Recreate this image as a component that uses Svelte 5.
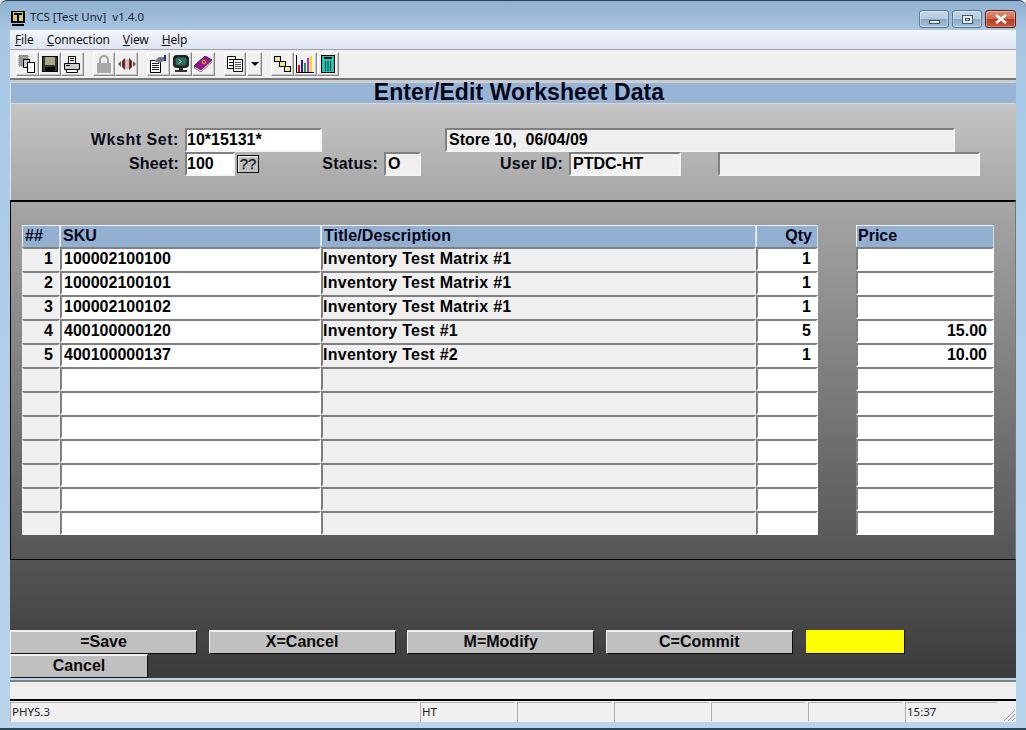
<script lang="ts">
	type Row = { sku: string; title: string; qty: string; price: string };

	const filled: Row[] = [
		{ sku: '100002100100', title: 'Inventory Test Matrix #1', qty: '1', price: '' },
		{ sku: '100002100101', title: 'Inventory Test Matrix #1', qty: '1', price: '' },
		{ sku: '100002100102', title: 'Inventory Test Matrix #1', qty: '1', price: '' },
		{ sku: '400100000120', title: 'Inventory Test #1', qty: '5', price: '15.00' },
		{ sku: '400100000137', title: 'Inventory Test #2', qty: '1', price: '10.00' }
	];
	const rows: Row[] = [...filled, ...Array(7).fill({ sku: '', title: '', qty: '', price: '' })];
	const actions = ['=Save', 'X=Cancel', 'M=Modify', 'C=Commit'];
	const panes = ['HT', '', '', '', ''];
</script>

<div class="window">
	<header class="titlebar">
		<svg class="app-icon" width="15" height="16" viewBox="0 0 15 16">
			<rect x="0" y="0" width="14" height="12" fill="#000" />
			<rect x="2" y="1" width="10" height="9" fill="#d8c860" />
			<path d="M3 2h8v2H8v6H6V4H3z" fill="#000" />
			<rect x="1" y="13" width="12" height="2" fill="#000" />
		</svg>
		<span class="caption">TCS [Test Unv]&nbsp; v1.4.0</span>
		<div class="caption-buttons">
			<div class="cap-btn"><i class="min-glyph"></i></div>
			<div class="cap-btn"><i class="max-glyph"></i></div>
			<div class="cap-btn close">
				<svg width="14" height="10" viewBox="0 0 14 10"><path d="M2 1l10 8M12 1L2 9" stroke="#fff" stroke-width="2.6" /></svg>
			</div>
		</div>
	</header>

	<nav class="menu">
		<span><u>F</u>ile</span>
		<span><u>C</u>onnection</span>
		<span><u>V</u>iew</span>
		<span><u>H</u>elp</span>
	</nav>

	<div class="toolbar">
		<div class="tool-group">
			<button class="tool" aria-label="Copy">
				<svg width="18" height="18" viewBox="0 0 18 18">
					<rect x="1" y="0" width="9" height="11" fill="#999" stroke="#777" stroke-dasharray="1 1" />
					<rect x="5.500" y="4.500" width="6" height="8" fill="#ccc" stroke="#000" />
					<rect x="9.500" y="7.500" width="7" height="10" fill="#fff" stroke="#000" />
				</svg>
			</button>
			<button class="tool" aria-label="Save">
				<svg width="16" height="16" viewBox="0 0 16 16">
					<rect x="0.5" y="0.5" width="15" height="15" fill="#3a3a26" stroke="#000" />
					<rect x="3" y="1" width="10" height="8" fill="#a8a888" />
					<rect x="3" y="11" width="10" height="5" fill="#0a0a0a" />
				</svg>
			</button>
			<button class="tool" aria-label="Print">
				<svg width="18" height="17" viewBox="0 0 18 17">
					<path d="M5.5 .5h7v7h-7z" fill="#fff" stroke="#000" />
					<path d="M7 2.500h4M7 4.500h4" stroke="#000" />
					<path d="M1.500 7.500h15v6h-15z" fill="#ccc" stroke="#000" />
					<path d="M3.500 13.500h11v3h-11z" fill="#fff" stroke="#000" />
					<path d="M3 9.500h4" stroke="#000" />
				</svg>
			</button>
		</div>
		<div class="tool-group">
			<button class="tool" aria-label="Lock">
				<svg width="16" height="18" viewBox="0 0 16 18">
					<path d="M4 8V5a4 4 0 0 1 8 0v3" fill="none" stroke="#a0a0a0" stroke-width="2" />
					<rect x="1" y="8" width="14" height="10" fill="#a8a8a8" />
				</svg>
			</button>
			<button class="tool" aria-label="Connect">
				<svg width="18" height="12" viewBox="0 0 18 12">
					<path d="M0 6l3-3v6z" fill="#555" />
					<path d="M7 0v12L4 9V3z" fill="#7a1f1f" />
					<path d="M11 0v12l3-3V3z" fill="#7a1f1f" />
					<path d="M18 6l-3-3v6z" fill="#555" />
					<path d="M8 1v10M10 1v10" stroke="#999" />
				</svg>
			</button>
		</div>
		<div class="tool-group">
			<button class="tool" aria-label="Properties">
				<svg width="18" height="18" viewBox="0 0 18 18">
					<path d="M1.500 5.500h10v12h-10z" fill="#fff" stroke="#000" />
					<path d="M3 8.500h7M3 10.500h7M3 12.500h7M3 14.500h7" stroke="#222" />
					<path d="M5 6l5-4h5v4l-5 2z" fill="#778" />
					<path d="M15 0h2v6h-2z" fill="#2030a0" />
				</svg>
			</button>
			<button class="tool" aria-label="Terminal">
				<svg width="18" height="18" viewBox="0 0 18 18">
					<rect x="1" y="0" width="16" height="13" rx="4" fill="#222" />
					<rect x="3.500" y="2.500" width="11" height="8" rx="2" fill="#2f6f5f" />
					<path d="M7 4.500l2 2-2 2" fill="none" stroke="#cfe" />
					<path d="M7 13h4v2H7zM3 15h12v2H3z" fill="#333" />
				</svg>
			</button>
			<button class="tool" aria-label="Book">
				<svg width="18" height="16" viewBox="0 0 18 16">
					<path d="M0 10L11 0l7 4L7 15z" fill="#a01090" stroke="#301030" />
					<path d="M0 10v2l7 4 11-10V4L7 14z" fill="#ead8ea" stroke="#301030" stroke-width=".5" />
					<circle cx="10" cy="6" r="1.800" fill="none" stroke="#e8c020" />
				</svg>
			</button>
		</div>
		<div class="tool-group">
			<button class="tool" aria-label="Documents">
				<svg width="16" height="16" viewBox="0 0 16 16">
					<path d="M.5.500h8v12h-8z" fill="#fff" stroke="#000" />
					<path d="M2 3.500h5M2 6.500h5M2 9.500h5" stroke="#000" />
					<path d="M6.500 3.500h9v12h-9z" fill="#fff" stroke="#000" />
					<path d="M8 6.500h6M8 8.500h6M8 10.500h6M8 12.500h6" stroke="#555" />
				</svg>
			</button>
			<button class="tool narrow" aria-label="More"><i class="caret"></i></button>
		</div>
		<div class="tool-group">
			<button class="tool" aria-label="Hierarchy">
				<svg width="17" height="16" viewBox="0 0 17 16">
					<path d="M4 3l5 5 5 5" stroke="#000" />
					<rect x=".5" y=".5" width="6" height="5" fill="#f0e890" stroke="#000" />
					<rect x="5.500" y="5.500" width="6" height="5" fill="#f0e890" stroke="#000" />
					<rect x="10.500" y="10.500" width="6" height="5" fill="#f0e890" stroke="#000" />
				</svg>
			</button>
			<button class="tool" aria-label="Chart">
				<svg width="18" height="18" viewBox="0 0 18 18">
					<path d="M.5 0v17.500H18" fill="none" stroke="#000" />
					<rect x="2" y="10" width="2" height="7" fill="#e01020" />
					<rect x="5" y="5" width="2" height="12" fill="#2020c0" />
					<rect x="8" y="8" width="2" height="9" fill="#10a040" />
					<rect x="11" y="3" width="2" height="14" fill="#d020c0" />
					<rect x="14" y="1" width="2" height="16" fill="#e8e020" />
				</svg>
			</button>
			<button class="tool" aria-label="Calculator">
				<svg width="14" height="18" viewBox="0 0 14 18">
					<rect x=".5" y=".5" width="13" height="17" fill="#20c8b8" stroke="#000" />
					<rect x="3" y="2" width="8" height="2" fill="#000" />
					<path d="M4.500 6v10M7 6v10M9.500 6v10" stroke="#033" />
				</svg>
			</button>
		</div>
	</div>

	<main class="form">
		<h1>Enter/Edit Worksheet Data</h1>

		<section class="head-panel">
			<div class="field-row">
				<label class="lbl-set wide-label" for="wkset">Wksht Set:</label>
				<div id="wkset" class="box white w-set">10*15131*</div>
				<div class="box store">Store 10,&nbsp; 06/04/09</div>
			</div>
			<div class="field-row">
				<label class="lbl-set" for="sheet">Sheet:</label>
				<div id="sheet" class="box white w-sheet">100</div>
				<button class="lookup">??</button>
				<label class="lbl-status" for="status">Status:</label>
				<div id="status" class="box w-status">O</div>
				<label class="lbl-user" for="user">User ID:</label>
				<div id="user" class="box w-user">PTDC-HT</div>
				<div class="box w-extra"></div>
			</div>
		</section>

		<section class="grid-panel">
			<div class="grid">
				<div class="th">##</div>
				<div class="th">SKU</div>
				<div class="th title-head">Title/Description</div>
				<div class="th right">Qty</div>
				<div class="spacer"></div>
				<div class="th price-head">Price</div>

				{#each rows as row, i}
					<div class="td right num">{row.sku ? i + 1 : ''}</div>
					<div class="td white">{row.sku}</div>
					<div class="td title">{row.title}</div>
					<div class="td white right">{row.qty}</div>
					<div class="spacer"></div>
					<div class="td white right">{row.price}</div>
				{/each}
			</div>
		</section>

		<section class="action-panel">
			<div class="action-row">
				{#each actions as label}
					<button class="action">{label}</button>
				{/each}
				<div class="flag"></div>
			</div>
			<div class="action-row">
				<button class="action cancel">Cancel</button>
			</div>
		</section>
	</main>

	<div class="message-bar"></div>

	<footer class="statusbar">
		<div class="pane wide">PHYS.3</div>
		{#each panes as pane}
			<div class="pane">{pane}</div>
		{/each}
		<div class="pane clock">15:37</div>
		<svg class="grip" width="16" height="16" viewBox="0 0 16 16">
			<path d="M15 4L4 15M15 8l-7 7M15 12l-3 3" stroke="#999" fill="none" />
		</svg>
	</footer>
</div>

<style>
	:global(body) {
		margin: 0;
		background: #e8eef0;
	}

	.window {
		box-sizing: border-box;
		width: 1026px;
		height: 730px;
		padding: 0 10px 6px;
		display: flex;
		flex-direction: column;
		border-radius: 7px 7px 0 0;
		border: 1px solid #2c4858;
		border-width: 1px 0 2px;
		background: linear-gradient(#8fb0d0 0, #a9c6e2 30px, #a9cbe8 120px, #bad4ec 100%);
		font-family: 'Liberation Sans', Arial, sans-serif;
		overflow: hidden;
	}

	.titlebar {
		flex: none;
		height: 29px;
		display: flex;
		align-items: center;
	}

	.app-icon {
		flex: none;
		margin: 6px 0 0 1px;
	}

	.caption {
		margin-left: 4px;
		margin-top: 1px;
		font: 11.5px 'Noto Sans', sans-serif;
		color: #1a2430;
	}

	.caption-buttons {
		margin-left: auto;
		display: flex;
		gap: 3px;
		align-self: flex-start;
		margin-top: 9px;
	}

	.cap-btn {
		box-sizing: border-box;
		width: 30px;
		height: 18px;
		display: flex;
		align-items: center;
		justify-content: center;
		border: 1px solid #5a7a98;
		border-radius: 3px;
		background: linear-gradient(#c6d8ea 0, #b4cadf 48%, #8aa8c2 52%, #a8c2d8 100%);
		box-shadow: inset 0 0 0 1px rgba(255, 255, 255, 0.35);
	}

	.cap-btn.close {
		width: 31px;
		border-color: #5a2018;
		background: linear-gradient(#dc8a78 0, #cf6a54 48%, #b83a22 52%, #c45a3e 100%);
	}

	.min-glyph {
		width: 11px;
		height: 4px;
		margin-top: 5px;
		background: #e8eef4;
		border: 1px solid #44586c;
		box-sizing: border-box;
	}

	.max-glyph {
		width: 11px;
		height: 9px;
		box-sizing: border-box;
		background: #e8eef4;
		border: 1px solid #44586c;
		box-shadow: inset 0 0 0 2px #e8eef4, inset 0 0 0 3px #44586c;
	}

	.menu {
		flex: none;
		box-sizing: border-box;
		height: 20px;
		display: flex;
		align-items: center;
		padding: 0 0 0 5px;
		gap: 13px;
		background: linear-gradient(#f4f7fb, #dde4f1);
		border-bottom: 1px solid #a0a0a8;
		font: 12px 'Noto Sans', sans-serif;
		letter-spacing: -0.12px;
		color: #111;
	}

	.toolbar {
		flex: none;
		box-sizing: border-box;
		height: 30px;
		display: flex;
		align-items: flex-start;
		gap: 9px;
		padding: 2px 0 0 6px;
		background: #f0f0f0;
		border-bottom: 2px solid #777;
	}

	.tool-group {
		display: flex;
	}

	.tool {
		box-sizing: border-box;
		width: 22.6px;
		height: 24px;
		padding: 0;
		display: flex;
		align-items: center;
		justify-content: center;
		background: #f0f0f0;
		border: 1px solid;
		border-color: #fff #888 #888 #fff;
		box-shadow: inset -1px -1px 0 #c8c8c8;
	}

	.tool.narrow {
		width: 15px;
		margin-left: 1px;
	}

	.caret {
		width: 0;
		height: 0;
		border: 4px solid transparent;
		border-top: 4px solid #000;
		border-bottom: 0;
	}

	.form {
		flex: 1;
		min-height: 0;
		display: flex;
		flex-direction: column;
		background: linear-gradient(#cccccc 0, #a6a6a6 120px, #3a3a3a 100%);
		color: #000;
		font-size: 16px;
		font-weight: 700;
	}

	h1 {
		flex: none;
		box-sizing: border-box;
		height: 22px;
		margin: 2px 0 0;
		padding-left: 12px;
		text-align: center;
		font-size: 23px;
		letter-spacing: 0.08px;
		line-height: 19px;
		font-weight: 700;
		background: #97b4d4;
		border: 1px solid;
		border-color: #c8d4e0 #97b4d4 #d8d8d8 #dce6f0;
		white-space: nowrap;
		color: #05051a;
	}

	.head-panel {
		flex: none;
		box-sizing: border-box;
		height: 96px;
		padding-top: 24px;
		border-left: 1px solid #dce6f0;
	}

	.field-row {
		display: flex;
		height: 24px;
	}

	label {
		box-sizing: border-box;
		text-align: right;
		line-height: 23px;
		padding-right: 6px;
		letter-spacing: 0.2px;
		color: #0a0a18;
	}

	.wide-label {
		letter-spacing: 0.55px;
	}

	.lbl-set {
		width: 174px;
	}

	.lbl-status {
		width: 125px;
	}

	.lbl-user {
		width: 148px;
	}

	.box {
		box-sizing: border-box;
		height: 24px;
		line-height: 20px;
		padding: 0 2px;
		background: #f0f0f0;
		border: 2px solid;
		border-color: #808080 #f4f4f4 #f4f4f4 #808080;
		white-space: nowrap;
	}

	.white {
		background: #fff;
	}

	.w-set {
		width: 137px;
		padding-left: 0;
	}

	.store {
		width: 510px;
		margin-left: 123px;
		background: #efefef;
	}

	.w-sheet {
		width: 50px;
		padding-left: 0;
	}

	.lookup {
		box-sizing: border-box;
		width: 22px;
		height: 18px;
		margin: 3px 0 0 2px;
		padding: 0;
		font: 400 15px 'Liberation Sans', sans-serif;
		-webkit-text-stroke: 0.25px #111;
		line-height: 14px;
		color: #111;
		background: #c0c0c0;
		border: 1px solid #111;
		box-shadow: inset 1px 1px 0 #f0f0f0;
	}

	.w-status {
		width: 37px;
	}

	.w-user {
		width: 112px;
	}

	.w-extra {
		width: 262px;
		margin-left: 37px;
	}

	.grid-panel {
		flex: none;
		box-sizing: border-box;
		height: 360px;
		padding: 23px 0 0 11px;
		border: 1px solid #000;
		border-top-width: 2px;
		border-right-color: #777;
	}

	.grid {
		display: grid;
		grid-template-columns: 38px 261px 435px 62px 38px 138px;
		grid-template-rows: 22px;
		grid-auto-rows: 24px;
	}

	.th {
		box-sizing: border-box;
		padding: 0 2px;
		line-height: 20px;
		background: #94b0d0;
		color: #05051a;
		border: 1px solid;
		border-color: #eef2f6 #d8dee6 #94b0d0 #eef2f6;
	}

	.th.right {
		padding-right: 5px;
	}

	.price-head {
		padding-left: 1px;
	}

	.title-head {
		letter-spacing: 0.12px;
	}

	.td {
		box-sizing: border-box;
		padding: 0;
		line-height: 20px;
		background: #f0f0f0;
		border: 2px solid;
		border-color: #808080 #f0f0f0 #f0f0f0 #808080;
		white-space: nowrap;
	}

	.td.num {
		border-left-color: #f0f0f0;
	}

	.td.white {
		background: #fff;
		padding-left: 2px;
		border-right-color: #fff;
		border-bottom-color: #fff;
	}

	.title {
		letter-spacing: 0.27px;
	}

	.right {
		text-align: right;
	}

	.td.right {
		padding-right: 5px;
	}

	.action-panel {
		flex: 1;
		display: flex;
		flex-direction: column;
		justify-content: flex-end;
	}

	.action-row {
		display: flex;
		gap: 11.6px;
		height: 24px;
	}

	.action {
		box-sizing: border-box;
		width: 187px;
		height: 24px;
		padding: 0 0 2px;
		font: 700 16px 'Liberation Sans', sans-serif;
		color: #0a0a0a;
		background: #c0c0c0;
		border: 1px solid #111;
		border-top-color: #f0f0f0;
		border-left-color: #f0f0f0;
		border-top-width: 2px;
	}

	.cancel {
		width: 138px;
	}

	.flag {
		box-sizing: border-box;
		width: 99px;
		height: 24px;
		margin-left: 1.600px;
		background: #ffff00;
		border: 1px solid #111;
		border-width: 0 1px 1px 0;
	}

	.message-bar {
		flex: none;
		box-sizing: border-box;
		height: 21px;
		margin-top: 2px;
		background: #f0f0f0;
		border-top: 2px solid #808080;
		border-bottom: 2px solid #000;
	}

	.statusbar {
		flex: none;
		box-sizing: border-box;
		height: 21px;
		display: flex;
		gap: 2px;
		padding-top: 1px;
		background: #f0f0f0;
		font: 11.5px 'Noto Sans', sans-serif;
		color: #222;
		position: relative;
	}

	.pane {
		box-sizing: border-box;
		width: 95px;
		padding: 1px 0 0 1px;
		border: 1px solid;
		border-color: #b0b0b0 transparent transparent #b0b0b0;
		line-height: 16px;
	}

	.pane.wide {
		width: 408px;
	}

	.pane.clock {
		width: 93px;
	}

	.grip {
		position: absolute;
		right: 0;
		bottom: 0;
	}
</style>
